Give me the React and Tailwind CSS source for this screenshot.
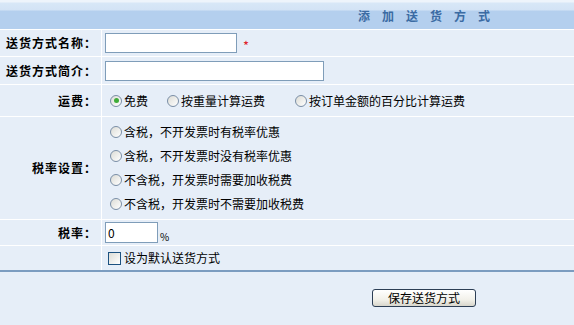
import React, { useState } from 'react';

const font = { fontFamily: '"Noto Sans CJK SC", "Liberation Sans", sans-serif' };

const taxOptions = [
  '含税，不开发票时有税率优惠',
  '含税，不开发票时没有税率优惠',
  '不含税，开发票时需要加收税费',
  '不含税，开发票时不需要加收税费'
];

function Radio({ checked }) {
  return (
    <span className="relative inline-flex h-[12px] w-[12px] shrink-0 items-center justify-center rounded-full border border-[#7a8ea6] bg-[linear-gradient(135deg,#dcdcd6,#ffffff)]">
      {checked && <span className="h-[5px] w-[5px] rounded-full bg-[#3eac38]" />}
    </span>
  );
}

function Row({ label, h, children, className = '' }) {
  return (
    <div className={`flex border-b border-white ${h}`}>
      <div className="flex w-[102px] shrink-0 items-center justify-end border-r border-white pr-[4px] text-[12px] font-bold tracking-[1px] text-black">
        {label}
      </div>
      <div className={`flex flex-1 pl-[3px] ${className}`}>{children}</div>
    </div>
  );
}

export default function App() {
  const [fee, setFee] = useState('free');
  const [tax, setTax] = useState(-1);
  const [rate, setRate] = useState('0');

  return (
    <div className="h-[325px] w-[574px] overflow-hidden bg-[#e6eef8] text-[12px] text-black" style={font}>
      {/* ## Cabecera */}
      <div className="flex h-[30px] items-center justify-end border-b border-white bg-[linear-gradient(to_bottom,#eef4fb_0px,#eef4fb_2px,#d8e7f7_3px,#d3e3f5_10px,#b4cfee_11px,#b4cfee_29px)] pr-[72px] pt-[3px]">
        <span className="text-[12px] font-bold tracking-[12px] text-[#3b6ba3]">添加送货方式</span>
      </div>

      <Row label="送货方式名称：" h="h-[27px]" className="items-center">
        <input className="h-[20px] w-[132px] border border-[#7f9db9] bg-white px-[2px] outline-none" />
        <span className="ml-[6px] mt-[6px] text-[13px] text-[#e0202a]">*</span>
      </Row>

      <Row label="送货方式简介：" h="h-[28px]" className="items-center">
        <input className="h-[20px] w-[219px] border border-[#7f9db9] bg-white px-[2px] outline-none" />
      </Row>

      <Row label="运费：" h="h-[32px]" className="items-center pl-[8px]">
        {[
          ['free', '免费', 'w-[57px]'],
          ['weight', '按重量计算运费', 'w-[128px]'],
          ['percent', '按订单金额的百分比计算运费', '']
        ].map(([key, text, w]) => (
          <label key={key} className={`flex items-center gap-[2px] ${w}`} onClick={() => setFee(key)}>
            <Radio checked={fee === key} />
            <span>{text}</span>
          </label>
        ))}
      </Row>

      <Row label="税率设置：" h="h-[103px]" className="flex-col justify-center gap-[7px] pl-[8px]">
        {taxOptions.map((text, i) => (
          <label key={text} className="flex h-[17px] items-center gap-[2px]" onClick={() => setTax(i)}>
            <Radio checked={tax === i} />
            <span>{text}</span>
          </label>
        ))}
      </Row>

      <Row label="税率：" h="h-[26px]" className="items-center">
        <input
          value={rate}
          onChange={(e) => setRate(e.target.value)}
          className="h-[21px] w-[53px] border border-[#7f9db9] bg-white px-[2px] text-[12px] outline-none"
        />
        <span className="ml-[2px] mt-[7px] text-[10px]">%</span>
      </Row>

      <div className="flex h-[26px] border-b-2 border-[#7b9cc0]">
        <div className="w-[102px] shrink-0 border-r border-white" />
        <label className="flex items-center gap-[3px] pl-[6px]">
          <span className="h-[13px] w-[13px] border border-[#1c5180] bg-[linear-gradient(135deg,#dcdcd6,#ffffff)]" />
          <span>设为默认送货方式</span>
        </label>
      </div>

      {/* ## Pie con boton */}
      <div className="flex justify-start pl-[372px] pt-[17px]">
        <button className="h-[18px] w-[104px] rounded-[3px] border border-[#2c3e55] bg-[linear-gradient(to_bottom,#ffffff,#f2f1ea_60%,#d8d6cc)] text-[12px] leading-none text-black">
          保存送货方式
        </button>
      </div>
    </div>
  );
}
